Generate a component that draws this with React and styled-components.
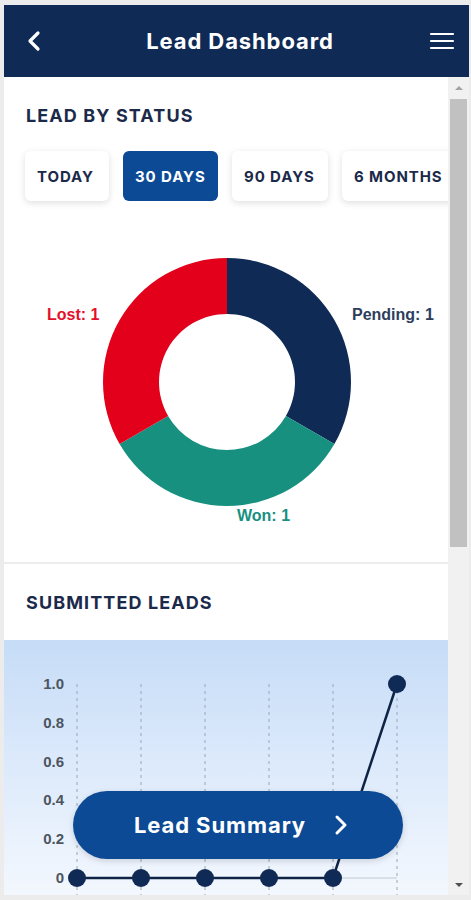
import React from "react";
import styled, { createGlobalStyle } from "styled-components";

const GlobalStyle = createGlobalStyle`
  html, body {
    margin: 0;
    padding: 0;
    background: #ececec;
  }
  * { box-sizing: border-box; }
`;

const NAVY = "#0f2a55";
const BLUE = "#0d4a95";

const Frame = styled.div`
  width: 471px;
  height: 900px;
  padding: 5px 2px 5px 4px;
  display: flex;
  flex-direction: column;
  background: #ececec;
  font-family: Inter, "Open Sans", sans-serif;
  overflow: hidden;
`;

const Header = styled.header`
  height: 72px;
  flex: none;
  background: ${NAVY};
  display: flex;
  align-items: center;
  justify-content: space-between;
  padding: 0 14px 0 17px;
  color: #fff;
`;

const HeaderTitle = styled.h1`
  margin: 0;
  font-size: 22px;
  font-weight: 700;
  letter-spacing: 0.9px;
  padding-left: 4px;
`;

const IconBtn = styled.div`
  width: 26px;
  height: 26px;
  display: flex;
  align-items: center;
  justify-content: center;
`;

const Body = styled.div`
  flex: 1;
  display: flex;
  min-height: 0;
`;

const Content = styled.main`
  flex: 1;
  display: flex;
  flex-direction: column;
  gap: 2px;
  overflow: hidden;
  background: #ececec;
`;

const Card = styled.section`
  background: #fff;
  flex: none;
  height: ${(p) => (p.$height ? `${p.$height}px` : "auto")};
  position: relative;
`;

const CardTitle = styled.h2`
  margin: 0;
  padding: 28px 0 0 22px;
  font-size: 18px;
  font-weight: 700;
  color: #1b2a4a;
  letter-spacing: 1.1px;
`;

const FilterRow = styled.div`
  display: flex;
  gap: 14px;
  padding: 25px 0 0 21px;
  white-space: nowrap;
`;

const FilterBtn = styled.div`
  flex: none;
  width: ${(p) => p.$w}px;
  height: 50px;
  padding-left: 12px;
  display: flex;
  align-items: center;
  border-radius: 6px;
  font-size: 15px;
  font-weight: 700;
  letter-spacing: 0.9px;
  color: ${(p) => (p.$active ? "#fff" : "#1b2a4a")};
  background: ${(p) => (p.$active ? BLUE : "#fff")};
  box-shadow: ${(p) => (p.$active ? "none" : "0 2px 7px rgba(0,0,0,0.13)")};
`;

const DonutWrap = styled.div`
  display: flex;
  justify-content: center;
  padding-top: 57px;
`;

const ChartArea = styled.div`
  position: relative;
  margin-top: 27px;
  height: 260px;
  background: linear-gradient(180deg, #c6dcf7 0%, #dbe9fb 45%, #f4f8fe 100%);
`;

const SummaryBtn = styled.div`
  position: absolute;
  left: 69px;
  top: 151px;
  width: 330px;
  height: 68px;
  border-radius: 34px;
  background: ${BLUE};
  color: #fff;
  display: flex;
  align-items: center;
  justify-content: center;
  gap: 28px;
  font-size: 22px;
  font-weight: 700;
  letter-spacing: 0.9px;
  padding-left: 6px;
  box-shadow: 0 2px 6px rgba(0,0,0,0.15);
`;

const Scrollbar = styled.div`
  width: 21px;
  flex: none;
  background: #f1f1f1;
  display: flex;
  flex-direction: column;
  align-items: center;
`;

const Arrow = styled.div`
  width: 0;
  height: 0;
  border-left: 4px solid transparent;
  border-right: 4px solid transparent;
  ${(p) =>
    p.$down
      ? "border-top: 4px solid #505050; margin: auto 0 8px;"
      : "border-bottom: 4px solid #a3a3a3; margin: 9px 0 0;"}
`;

const Thumb = styled.div`
  width: 17px;
  height: 448px;
  margin-top: 9px;
  background: #c1c1c1;
`;

const pts = [
  [73, 238],
  [137, 238],
  [201, 238],
  [265, 238],
  [329, 238],
  [393, 44],
];

const arc = (cx, cy, r1, r2, a0, a1) => {
  const rad = (a) => (a * Math.PI) / 180;
  const p = (r, a) => [cx + r * Math.cos(rad(a)), cy + r * Math.sin(rad(a))];
  const [x1, y1] = p(r2, a0);
  const [x2, y2] = p(r2, a1);
  const [x3, y3] = p(r1, a1);
  const [x4, y4] = p(r1, a0);
  const large = a1 - a0 > 180 ? 1 : 0;
  return `M${x1} ${y1} A${r2} ${r2} 0 ${large} 1 ${x2} ${y2} L${x3} ${y3} A${r1} ${r1} 0 ${large} 0 ${x4} ${y4} Z`;
};

function Donut() {
  const cx = 222;
  const cy = 124;
  return (
    <svg width="443" height="270" viewBox="0 0 443 270">
      <path d={arc(cx, cy, 68, 124, -90, 30)} fill="#0f2a55" />
      <path d={arc(cx, cy, 68, 124, 30, 150)} fill="#17907f" />
      <path d={arc(cx, cy, 68, 124, 150, 270)} fill="#e2001a" />
      <g fontFamily="'Liberation Sans', Arial, sans-serif" fontWeight="700" fontSize="16">
        <text x="42" y="62" fill="#e2102a">Lost: 1</text>
        <text x="347" y="62" fill="#2d3d5c">Pending: 1</text>
        <text x="232" y="263" fill="#17907f">Won: 1</text>
      </g>
    </svg>
  );
}

function LineChart() {
  const ticks = ["1.0", "0.8", "0.6", "0.4", "0.2", "0"];
  return (
    <svg width="443" height="260" viewBox="0 0 443 260">
      {pts.map(([x]) => (
        <line key={x} x1={x} y1="44" x2={x} y2="260" stroke="#9aa6b4" strokeWidth="1" strokeDasharray="3 4" />
      ))}
      <line x1="73" y1="238" x2="393" y2="238" stroke="#c3c9d1" strokeWidth="1" />
      <g fontFamily="'Liberation Sans', Arial, sans-serif" fontWeight="700" fontSize="15" fill="#4d5560" textAnchor="end">
        {ticks.map((t, i) => (
          <text key={t} x="60" y={44 + i * 38.8 + 5}>{t}</text>
        ))}
      </g>
      <polyline points={pts.map((p) => p.join(",")).join(" ")} fill="none" stroke="#0f2444" strokeWidth="2.5" />
      {pts.map(([x, y]) => (
        <circle key={x} cx={x} cy={y} r="9" fill="#0f2a55" />
      ))}
    </svg>
  );
}

export default function App() {
  return (
    <>
      <GlobalStyle />
      <Frame>
        <Header>
          <IconBtn>
            <svg width="18" height="22" viewBox="0 0 18 22">
              <path d="M13 3 L5 11 L13 19" fill="none" stroke="#fff" strokeWidth="3.2" strokeLinecap="round" strokeLinejoin="round" />
            </svg>
          </IconBtn>
          <HeaderTitle>Lead Dashboard</HeaderTitle>
          <IconBtn>
            <svg width="26" height="20" viewBox="0 0 26 20">
              <g stroke="#fff" strokeWidth="2.2" strokeLinecap="round">
                <line x1="2" y1="3" x2="24" y2="3" />
                <line x1="2" y1="10" x2="24" y2="10" />
                <line x1="2" y1="17" x2="24" y2="17" />
              </g>
            </svg>
          </IconBtn>
        </Header>
        <Body>
          <Content>
            <Card $height={485}>
              <CardTitle>LEAD BY STATUS</CardTitle>
              <FilterRow>
                <FilterBtn $w={84}>TODAY</FilterBtn>
                <FilterBtn $w={95} $active>30 DAYS</FilterBtn>
                <FilterBtn $w={96}>90 DAYS</FilterBtn>
                <FilterBtn $w={118}>6 MONTHS</FilterBtn>
              </FilterRow>
              <DonutWrap>
                <Donut />
              </DonutWrap>
            </Card>
            <Card>
              <CardTitle>SUBMITTED LEADS</CardTitle>
              <ChartArea>
                <LineChart />
                <SummaryBtn>
                  <span>Lead Summary</span>
                  <svg width="14" height="22" viewBox="0 0 14 22">
                    <path d="M3 3 L11 11 L3 19" fill="none" stroke="#fff" strokeWidth="3" strokeLinecap="round" strokeLinejoin="round" />
                  </svg>
                </SummaryBtn>
              </ChartArea>
            </Card>
          </Content>
          <Scrollbar>
            <Arrow />
            <Thumb />
            <Arrow $down />
          </Scrollbar>
        </Body>
      </Frame>
    </>
  );
}
